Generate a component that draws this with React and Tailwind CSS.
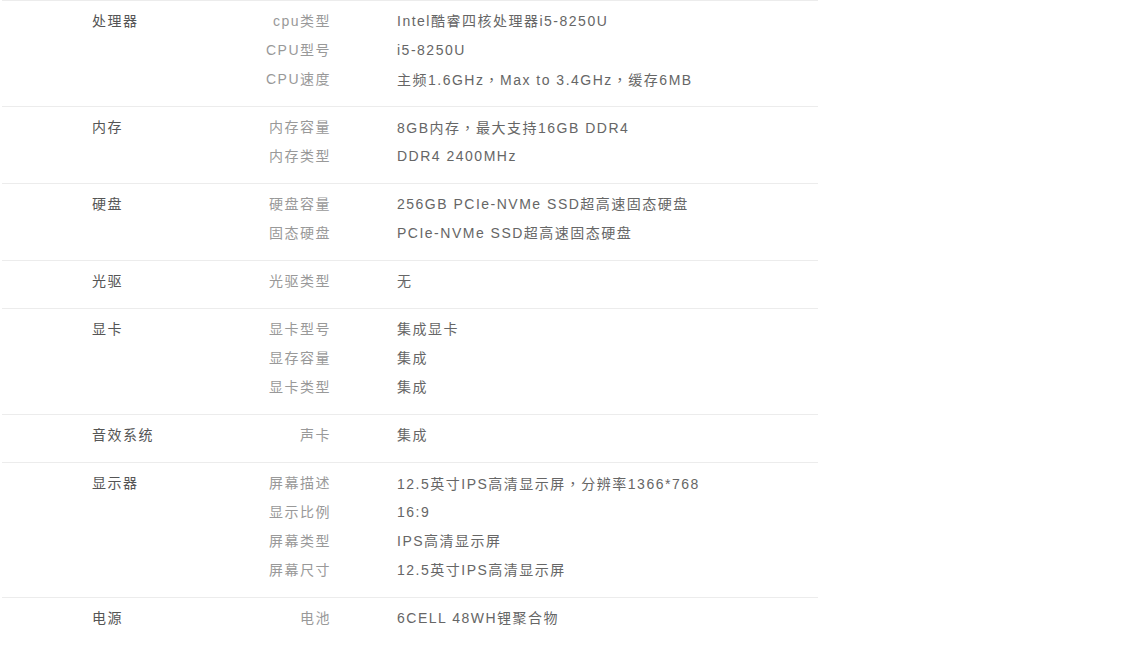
import React from "react";

const specs = [
  {
    group: "处理器",
    items: [
      ["cpu类型", "Intel酷睿四核处理器i5-8250U"],
      ["CPU型号", "i5-8250U"],
      ["CPU速度", "主频1.6GHz，Max to 3.4GHz，缓存6MB"],
    ],
  },
  {
    group: "内存",
    items: [
      ["内存容量", "8GB内存，最大支持16GB DDR4"],
      ["内存类型", "DDR4 2400MHz"],
    ],
  },
  {
    group: "硬盘",
    items: [
      ["硬盘容量", "256GB PCIe-NVMe SSD超高速固态硬盘"],
      ["固态硬盘", "PCIe-NVMe SSD超高速固态硬盘"],
    ],
  },
  { group: "光驱", items: [["光驱类型", "无"]] },
  {
    group: "显卡",
    items: [
      ["显卡型号", "集成显卡"],
      ["显存容量", "集成"],
      ["显卡类型", "集成"],
    ],
  },
  { group: "音效系统", items: [["声卡", "集成"]] },
  {
    group: "显示器",
    items: [
      ["屏幕描述", "12.5英寸IPS高清显示屏，分辨率1366*768"],
      ["显示比例", "16:9"],
      ["屏幕类型", "IPS高清显示屏"],
      ["屏幕尺寸", "12.5英寸IPS高清显示屏"],
    ],
  },
  { group: "电源", items: [["电池", "6CELL 48WH锂聚合物"]] },
];

// full-width comma is centred in the reference
const Value = ({ text }) => {
  const parts = text.split("，");
  return parts.map((p, i) => (
    <React.Fragment key={i}>
      {p}
      {i < parts.length - 1 && (
        <span className="font-['Noto_Sans_CJK_TC',sans-serif]">，</span>
      )}
    </React.Fragment>
  ));
};

export default function App() {
  return (
    <div className="bg-white min-h-screen font-['Liberation_Sans','Noto_Sans_CJK_SC',sans-serif] text-[14px] tracking-[1.5px]">
      <div className="ml-[2px] w-[816px]">
        {specs.map((row) => (
          <div key={row.group} className="flex border-t border-[#ececec] pt-[6px] pb-[12px]">
            <div className="w-[150px] shrink-0 pl-[90px] h-[29px] leading-[29px] whitespace-nowrap text-[#555]">
              {row.group}
            </div>
            <div className="flex flex-col">
              {row.items.map(([label, value]) => (
                <div key={label} className="flex h-[29px] leading-[29px] whitespace-nowrap">
                  <div className="w-[179px] text-right text-[#999]">{label}</div>
                  <div className="pl-[66px] text-[#666]">
                    <Value text={value} />
                  </div>
                </div>
              ))}
            </div>
          </div>
        ))}
      </div>
    </div>
  );
}
